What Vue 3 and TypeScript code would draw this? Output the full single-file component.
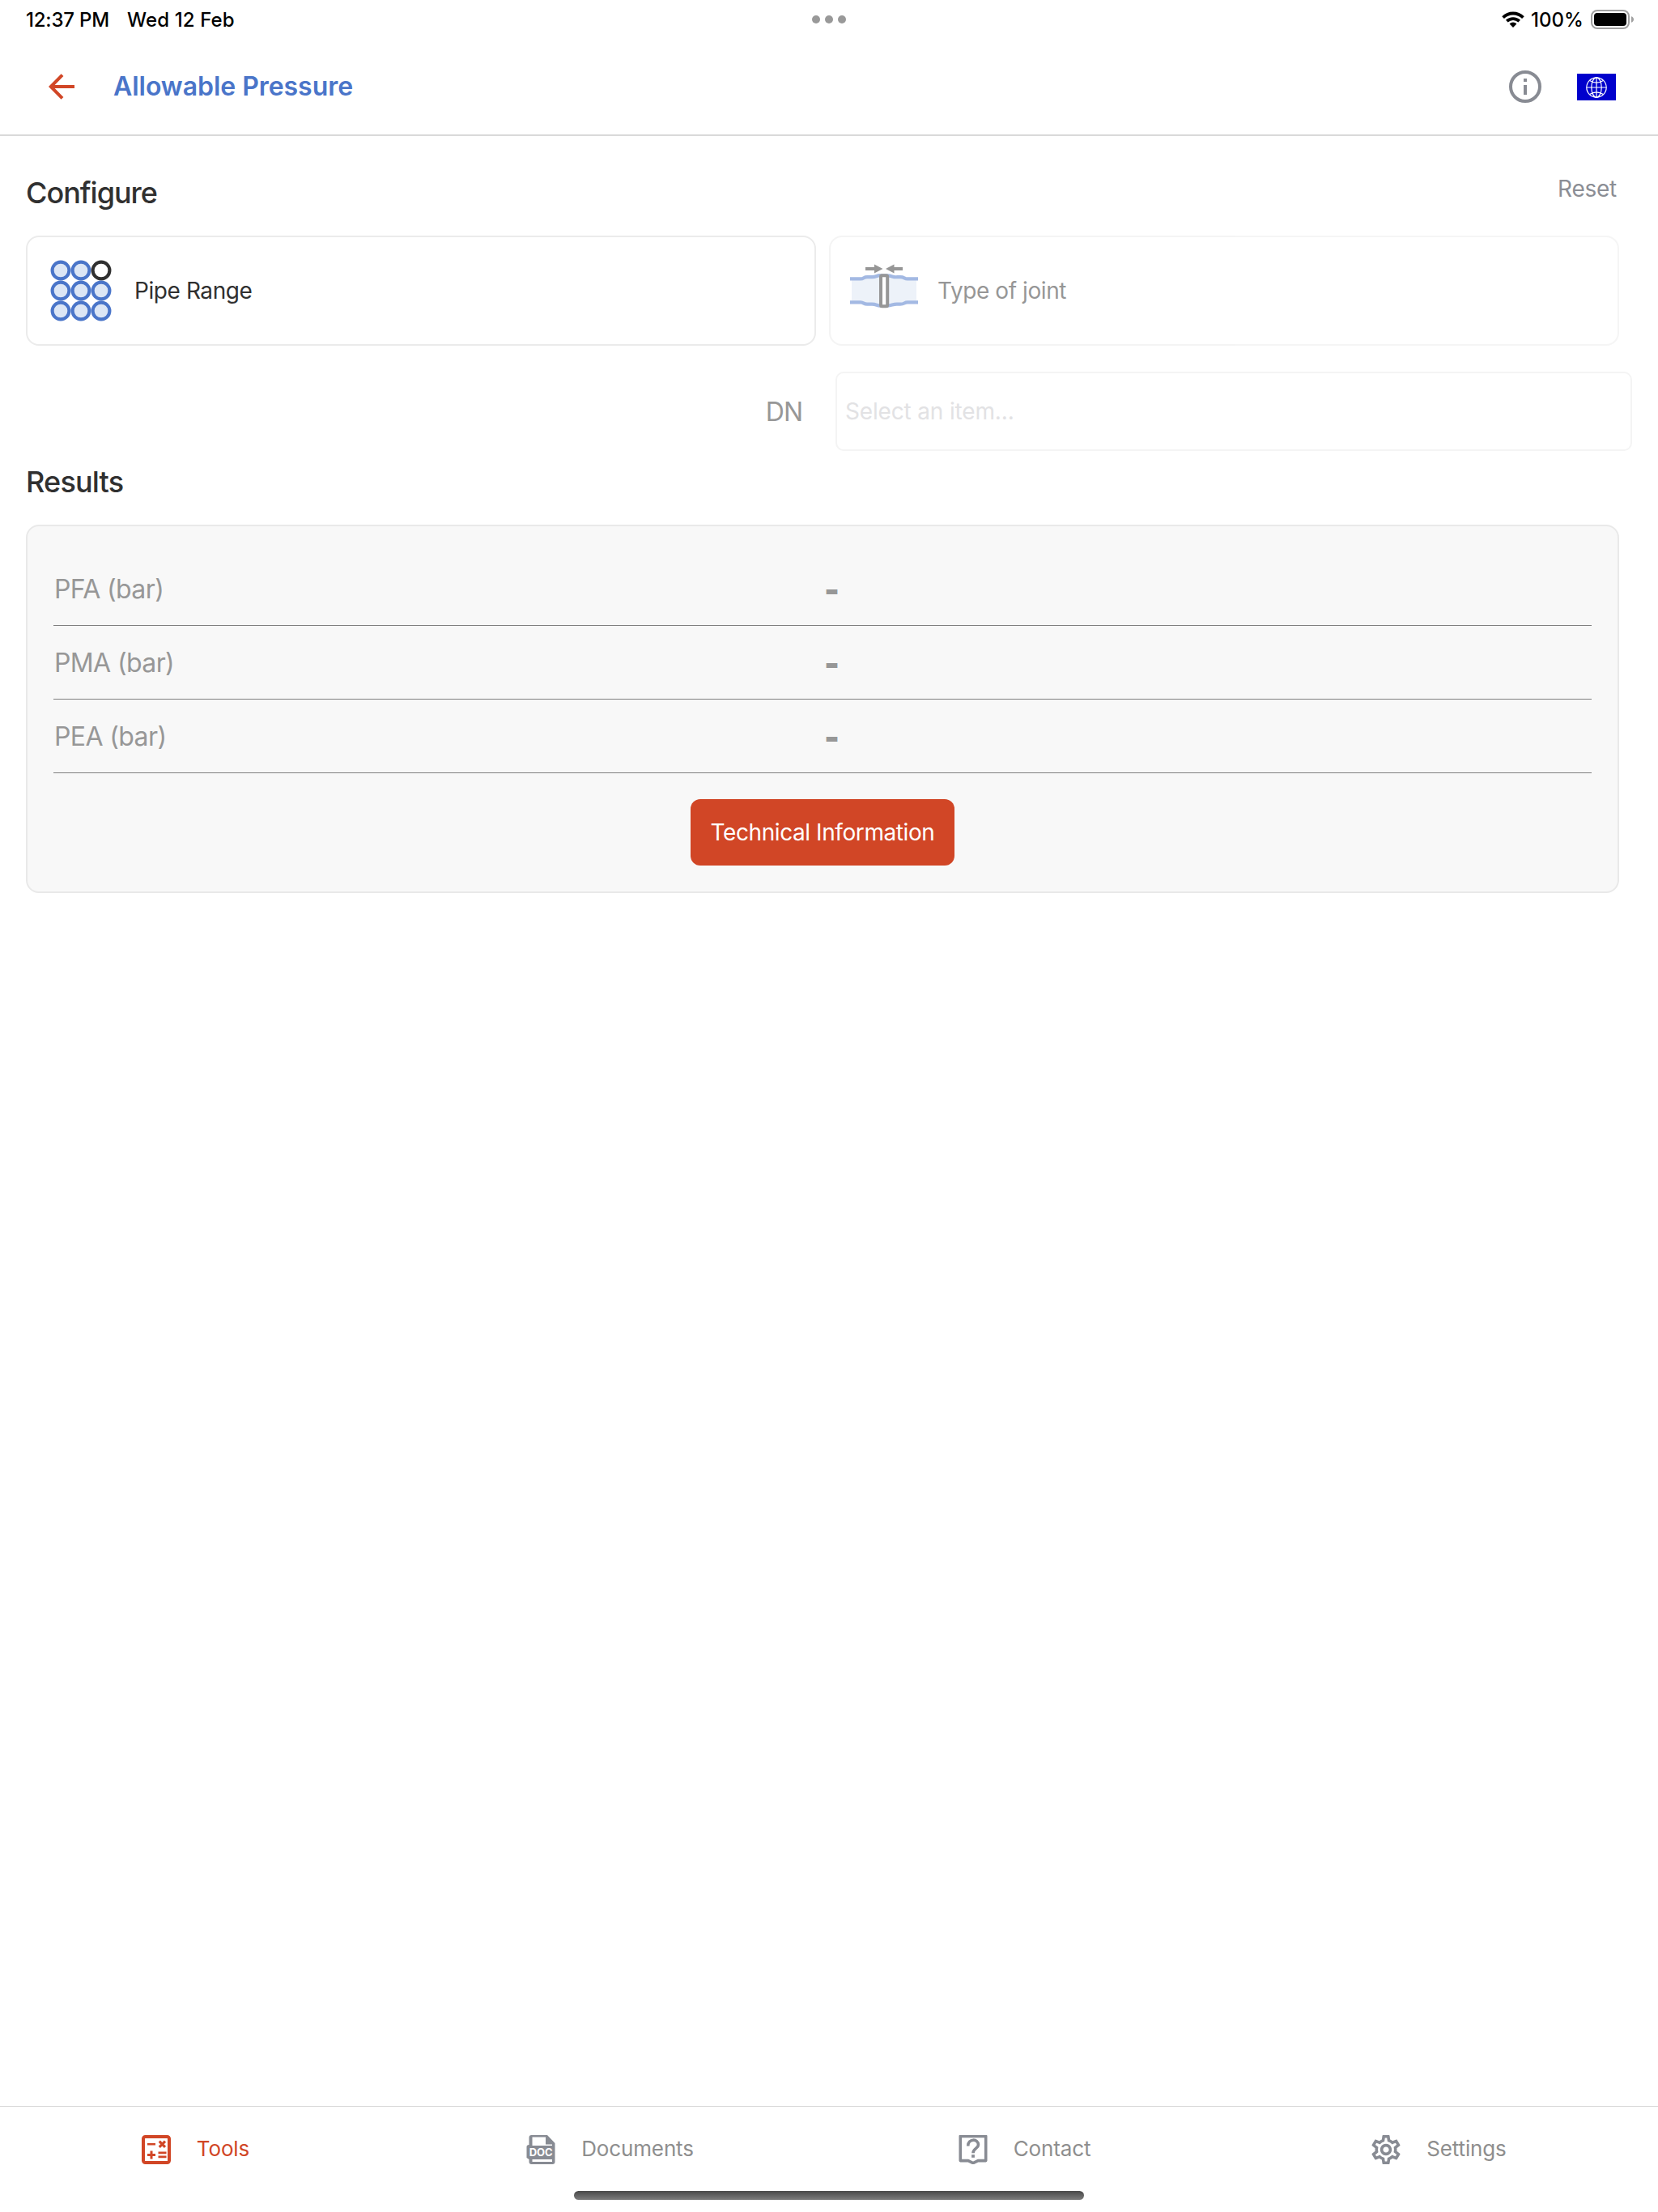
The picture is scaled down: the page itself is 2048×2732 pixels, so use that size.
<script setup lang="ts">
interface Tab {
  id: 'tools' | 'documents' | 'contact' | 'settings'
  label: string
  active?: boolean
}

const results: string[] = ['PFA (bar)', 'PMA (bar)', 'PEA (bar)']

const tabs: Tab[] = [
  { id: 'tools', label: 'Tools', active: true },
  { id: 'documents', label: 'Documents' },
  { id: 'contact', label: 'Contact' },
  { id: 'settings', label: 'Settings' },
]

const pipes = Array.from({ length: 9 }, (_, i) => ({
  x: 13 + (i % 3) * 25,
  y: 13 + Math.floor(i / 3) * 25,
  empty: i === 2,
}))
</script>

<template>
  <div class="screen">
    <div class="status">
      <div class="side">
        <span class="time">12:37 PM</span>
        <span class="date">Wed 12 Feb</span>
      </div>
      <div class="dots"><i /><i /><i /></div>
      <div class="side right">
        <svg class="wifi" width="28" height="20" viewBox="0 0 28 20">
          <path d="M1.6 7.6A17.6 17.6 0 0 1 26.4 7.6" fill="none" stroke="#000" stroke-width="3.8" />
          <path d="M6.3 12.2A11 11 0 0 1 21.7 12.2" fill="none" stroke="#000" stroke-width="3.8" />
          <path d="M14 20l-4.4-4.6a6.3 6.3 0 0 1 8.8 0z" />
        </svg>
        <span class="percent">100%</span>
        <svg width="53" height="24" viewBox="0 0 53 24">
          <rect x="1" y="1" width="46" height="22" rx="7" fill="none" stroke="#a0a0a0" stroke-width="2" />
          <rect x="4" y="4" width="40" height="16" rx="4" />
          <path d="M50 8.2q3 1 3 3.8t-3 3.8z" fill="#a0a0a0" />
        </svg>
      </div>
    </div>

    <header class="nav">
      <svg width="32" height="32" viewBox="0 0 32 32" fill="none" stroke="#d14626" stroke-width="4">
        <path d="M3 16H32M17 1.6L2.8 16L17 30.4" />
      </svg>
      <h1>Allowable Pressure</h1>
      <svg class="info" width="40" height="40" viewBox="0 0 40 40" fill="#888b93">
        <circle cx="20" cy="20" r="18" fill="none" stroke="#888b93" stroke-width="4" />
        <path d="M18 10h4v4h-4zM18 18h4v12h-4z" />
      </svg>
      <svg class="flag" width="48" height="33" viewBox="0 0 48 33">
        <path fill="#0000cc" d="M0 0h48v33H0z" />
        <g fill="none" stroke="#fff" stroke-width="1.2">
          <circle cx="24" cy="17" r="12.2" />
          <ellipse cx="24" cy="17" rx="6.2" ry="12.2" />
          <path d="M24 4.8v24.4M11.8 17h24.4M15.6 8.6q8.4 5.2 16.8 0M15.6 25.4q8.4-5.2 16.8 0" />
        </g>
      </svg>
    </header>

    <main>
      <div class="section-head">
        <h2 class="t-configure">Configure</h2>
        <span class="reset">Reset</span>
      </div>

      <div class="cards">
        <div class="card">
          <div class="slot">
            <svg width="76" height="76" viewBox="0 0 76 76">
              <circle
                v-for="(p, i) in pipes"
                :key="i"
                :cx="p.x"
                :cy="p.y"
                r="10.4"
                stroke-width="4.1"
                :stroke="p.empty ? '#303030' : '#4a75c9'"
                :fill="p.empty ? '#fff' : '#dce6f5'"
              />
            </svg>
          </div>
          <span class="t-pipe">Pipe Range</span>
        </div>
        <div class="card disabled">
          <div class="slot">
            <svg width="84" height="66" viewBox="0 0 84 66">
              <path fill="#dce6f5" d="M2 18H14L20 16H28L36 14H48L56 16H64L70 18H82V48H70L64 50H56L48 52H36L28 50H20L14 48H2z" />
              <g fill="none" stroke="#4a75c9" stroke-width="4.2">
                <path d="M0 18.4H13Q15 18.4 17 17.2T22 16.2H27Q30 16.2 33 15T38 14.4H46Q49 14.4 52 15.4T58 16.2H62Q65 16.2 67 17.3T71 18.4H84" />
                <path d="M0 47.4H13Q15 47.4 17 48.6T22 49.6H27Q30 49.6 33 50.8T38 51.6H46Q49 51.6 52 50.6T58 49.6H62Q65 49.6 67 48.5T71 47.4H84" />
              </g>
              <rect x="38" y="14.2" width="8.2" height="38" rx="1.5" fill="#fff" stroke="#303030" stroke-width="4" />
              <path fill="#303030" d="M19 4h11V.6L40.5 6 30 11.4V8H19zM65 4H54.5V.6L44 6l10.5 5.4V8H65z" />
            </svg>
          </div>
          <span class="t-joint">Type of joint</span>
        </div>
      </div>

      <div class="dn">
        <label class="t-dn">DN</label>
        <div class="select"><span>Select an item...</span></div>
      </div>

      <h2 class="t-results">Results</h2>
      <section class="panel">
        <div v-for="r in results" :key="r" class="row">
          <span class="name">{{ r }}</span>
          <span class="value">-</span>
        </div>
        <button type="button"><span>Technical Information</span></button>
      </section>
    </main>

    <nav class="tabs">
      <a v-for="t in tabs" :key="t.id" :class="['tab', t.id, { active: t.active }]">
        <svg v-if="t.id === 'tools'" width="36" height="36" viewBox="0 0 36 36" fill="currentColor">
          <rect x="2" y="2" width="32" height="32" rx="2.5" fill="none" stroke="currentColor" stroke-width="4" />
          <path d="M7 10h10v2.6H7zM10.5 19.5h3v3.5H17v3h-3.5v3.5h-3V26H7v-3h3.5zM20.5 20.4h10v2.8h-10zM20.5 25.4h10v2.8h-10z" />
          <path d="M21.8 7.6l7.2 7.2M29 7.6l-7.2 7.2" stroke="currentColor" stroke-width="3.2" />
        </svg>
        <svg v-else-if="t.id === 'documents'" width="36" height="36" viewBox="0 0 36 36">
          <path fill="#888b93" d="M6.5 0H26l9.5 10v23a3 3 0 0 1-3 3h-26a3 3 0 0 1-3-3v-3L.5 28V14.5q0-2.5 3-2.5V3a3 3 0 0 1 3-3z" />
          <path fill="#fff" d="M7.5 2.5H24v9h8V13H7.5zM7.5 30H32v3H7.5z" />
          <text x="18.2" y="26" text-anchor="middle" textLength="29">DOC</text>
        </svg>
        <svg v-else-if="t.id === 'contact'" width="36" height="36" viewBox="0 0 36 36" fill="none" stroke="#888b93">
          <path stroke-width="3.6" d="M2.3 1.4H33.7V31.6H24L18 34.6L12 31.6H2.3z" stroke-linejoin="round" />
          <path stroke-width="3.6" d="M11.7 13.5C11.7 4 24.5 4 24.5 12C24.5 16.5 18 16.5 18 22.2" />
          <path stroke-width="3.8" d="M18 24.2V27.8" />
        </svg>
        <svg v-else width="36" height="36" viewBox="2 2 20 20" fill="#888b93">
          <path d="M19.43 12.98c.04-.32.07-.64.07-.98 0-.34-.03-.66-.07-.98l2.11-1.65c.19-.15.24-.42.12-.64l-2-3.46c-.09-.16-.26-.25-.44-.25-.06 0-.12.01-.17.03l-2.49 1c-.52-.4-1.08-.73-1.69-.98l-.38-2.65C14.46 2.18 14.25 2 14 2h-4c-.25 0-.46.18-.49.42l-.38 2.65c-.61.25-1.17.59-1.69.98l-2.49-1c-.06-.02-.12-.03-.18-.03-.17 0-.34.09-.43.25l-2 3.46c-.13.22-.07.49.12.64l2.11 1.65c-.04.32-.07.65-.07.98 0 .33.03.66.07.98l-2.11 1.65c-.19.15-.24.42-.12.64l2 3.46c.09.16.26.25.44.25.06 0 .12-.01.17-.03l2.49-1c.52.4 1.08.73 1.69.98l.38 2.65c.03.24.24.42.49.42h4c.25 0 .46-.18.49-.42l.38-2.65c.61-.25 1.17-.59 1.69-.98l2.49 1c.06.02.12.03.18.03.17 0 .34-.09.43-.25l2-3.46c.12-.22.07-.49-.12-.64l-2.11-1.65zm-1.98-1.71c.04.31.05.52.05.73 0 .21-.02.43-.05.73l-.14 1.13.89.7 1.08.84-.7 1.21-1.27-.51-1.04-.42-.9.68c-.43.32-.84.56-1.25.73l-1.06.43-.16 1.13-.2 1.35h-1.4l-.19-1.35-.16-1.13-1.06-.43c-.43-.18-.83-.41-1.23-.71l-.91-.7-1.06.43-1.27.51-.7-1.21 1.08-.84.89-.7-.14-1.13c-.03-.31-.05-.54-.05-.74s.02-.43.05-.73l.14-1.13-.89-.7-1.08-.84.7-1.21 1.27.51 1.04.42.9-.68c.43-.32.84-.56 1.25-.73l1.06-.43.16-1.13.2-1.35h1.39l.19 1.35.16 1.13 1.06.43c.43.18.83.41 1.23.71l.91.7 1.06-.43 1.27-.51.7 1.21-1.07.85-.89.7.14 1.13zM12 8c-2.21 0-4 1.79-4 4s1.79 4 4 4 4-1.79 4-4-1.79-4-4-4zm0 6c-1.1 0-2-.9-2-2s.9-2 2-2 2 .9 2 2-.9 2-2 2z" />
        </svg>
        <span>{{ t.label }}</span>
      </a>
    </nav>
    <div class="home"><i /></div>
  </div>
</template>

<style>
body {
  background: #fff;
}
</style>

<style scoped>
.screen {
  display: flex;
  flex-direction: column;
  box-sizing: border-box;
  width: 2048px;
  height: 2732px;
  overflow: hidden;
  background: #fff;
  color: #303030;
  font-family: Inter, 'Liberation Sans', sans-serif;
  font-size: 28px;
  white-space: nowrap;
}
svg {
  display: block;
  flex: none;
}
h1,
h2 {
  margin: 0;
}
.status {
  display: flex;
  align-items: center;
  height: 48px;
  padding: 0 30px;
  color: #000;
  font-size: 24px;
  font-weight: 500;
  line-height: 47px;
}
.side {
  display: flex;
  align-items: center;
  flex: 1 1 0;
}
.side.right {
  justify-content: flex-end;
}
.time {
  width: 125px;
  margin-left: 2px;
  letter-spacing: -0.2px;
}
.date {
  letter-spacing: 0.12px;
}
.dots {
  display: flex;
  gap: 6px;
}
.dots i {
  width: 10px;
  height: 10px;
  border-radius: 50%;
  background: #999;
}
.percent {
  width: 67px;
  margin: 0 7px 0 8px;
}
.nav {
  display: flex;
  align-items: center;
  box-sizing: border-box;
  height: 120px;
  padding: 0 52px 0 60px;
  border-bottom: 2px solid #d9d9d9;
}
.nav h1 {
  margin-left: 48px;
  color: #4a75c9;
  font-size: 32px;
  font-weight: 600;
  line-height: 38px;
  letter-spacing: -0.04px;
}
.info {
  margin-left: auto;
}
.flag {
  margin-left: 44px;
}
main {
  flex: 1;
  padding: 48px 48px 0 32px;
}
.section-head {
  display: flex;
  justify-content: space-between;
  height: 75px;
}
h2 {
  font-size: 36px;
  font-weight: 500;
  line-height: 44px;
}
.t-configure {
  letter-spacing: -1px;
}
.t-results {
  letter-spacing: -0.8px;
}
.reset {
  margin-right: 3px;
  color: #8b8e95;
  line-height: 34px;
  letter-spacing: -0.25px;
}
.cards {
  display: flex;
  gap: 16px;
}
.card {
  display: flex;
  align-items: center;
  flex: 1;
  box-sizing: border-box;
  height: 136px;
  padding-left: 24px;
  border: 2px solid #ebebeb;
  border-radius: 16px;
  letter-spacing: -0.42px;
}
.disabled {
  opacity: 0.5;
}
.slot {
  display: flex;
  justify-content: center;
  width: 84px;
  margin-right: 24px;
}
.dn {
  display: flex;
  align-items: center;
  justify-content: flex-end;
  height: 98px;
  margin: 32px -16px 16px 0;
}
.t-dn {
  margin-right: 41px;
  color: #979797;
  font-size: 32px;
  letter-spacing: -1px;
}
.select {
  box-sizing: border-box;
  width: 984px;
  height: 98px;
  padding-left: 10px;
  border: 2px solid #f4f4f4;
  border-radius: 10px;
  color: #e2e2e4;
  line-height: 94px;
  letter-spacing: -0.16px;
}
.panel {
  display: flex;
  flex-direction: column;
  margin-top: 31px;
  padding: 32px;
  border: 2px solid #e9e9e9;
  border-radius: 16px;
  background: #f8f8f8;
}
.row {
  display: flex;
  align-items: center;
  box-sizing: border-box;
  height: 91px;
  border-bottom: 1px solid #7f7f7f;
  color: #979797;
  font-size: 32px;
}
.name {
  box-sizing: border-box;
  width: 952px;
  padding-left: 1px;
  letter-spacing: -0.62px;
}
.value {
  padding-top: 3px;
  font-size: 40px;
  font-weight: 900;
}
button {
  align-self: center;
  width: 326px;
  height: 82px;
  margin-top: 32px;
  padding: 0;
  border: 0;
  border-radius: 12px;
  background: #d14626;
  color: #fff;
  font: inherit;
  letter-spacing: -0.42px;
}
.tabs {
  display: flex;
  height: 104px;
  border-top: 1px solid #d8d8d8;
}
.tab {
  display: flex;
  align-items: center;
  justify-content: center;
  flex: 1;
  padding: 1px 29px 0 0;
  box-sizing: border-box;
  color: #8e8e8e;
  font-size: 26px;
}
.tab span {
  margin: 0 0 2px 32px;
  letter-spacing: -0.14px;
}
.tab text {
  fill: #fff;
  font-size: 13px;
  font-weight: 700;
}
.active {
  color: #d14626;
}
.home {
  display: flex;
  justify-content: center;
  height: 26px;
}
.home i {
  width: 630px;
  height: 11px;
  border-radius: 6px;
  background: linear-gradient(#484848, #7c7c7c);
}
</style>
